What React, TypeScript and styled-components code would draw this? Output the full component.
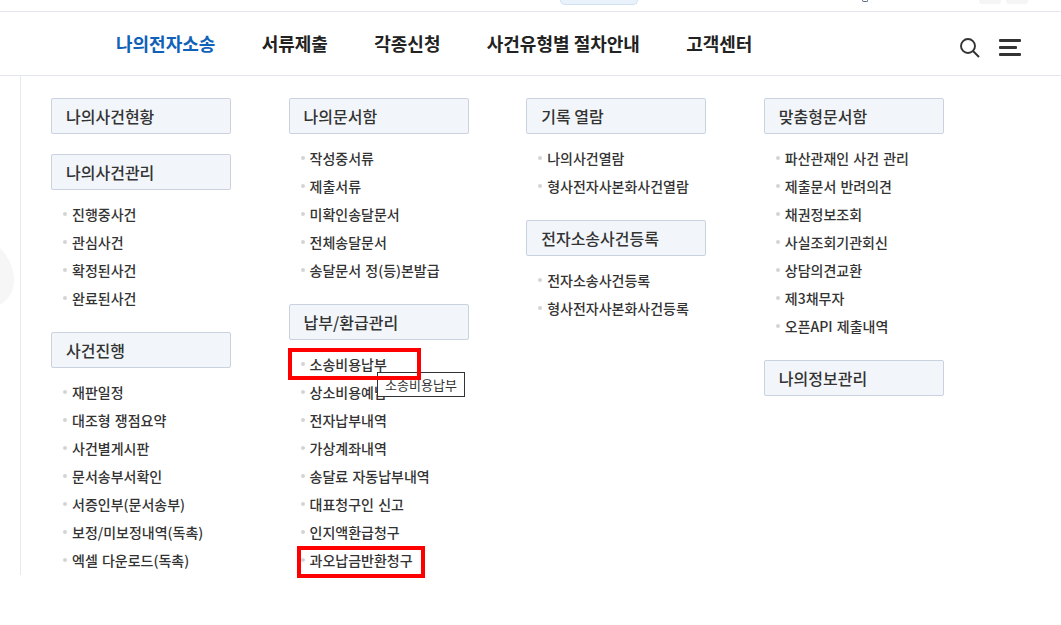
import React from 'react';
import styled, { createGlobalStyle } from 'styled-components';

const GlobalStyle = createGlobalStyle`
    html, body {
        margin: 0;
        padding: 0;
        background: #fff;
    }
    body {
        font-family: "Noto Sans CJK KR", "Noto Sans", sans-serif;
        overflow: hidden;
    }
`;

const Page = styled.div`
    position: relative;
    width: 1061px;
    height: 625px;
    overflow: hidden;
    background: #fff;
`;

const TopStrip = styled.div`
    display: flex;
    height: 11px;
    border-bottom: 1px solid #e6e8ee;
    padding-left: 560px;
`;

const TopPill = styled.div`
    width: 78px;
    height: 5px;
    box-sizing: border-box;
    background: #e9f1fb;
    border: 1px solid #d0e0f3;
    border-top: 0;
    border-radius: 0 0 10px 10px;
`;

const TopMark = styled.div`
    width: 6px;
    height: 2px;
    margin-left: 224px;
    border: 1px solid #5a6a80;
    border-top: 0;
    box-sizing: border-box;
    border-radius: 0 0 3px 3px;
`;

const TopButtons = styled.div`
    display: flex;
    gap: 5px;
    margin-left: 111px;
`;

const TopButton = styled.div`
    width: 22px;
    height: 4px;
    background: #f5f5f5;
    border-radius: 0 0 3px 3px;
`;

const Header = styled.header`
    display: flex;
    align-items: center;
    justify-content: space-between;
    height: 63px;
    padding: 0 40px 0 116px;
    border-bottom: 1px solid #e3e6ec;
`;

const Nav = styled.nav`
    display: flex;
    gap: 46.3px;
    margin-top: -2px;
`;

const NavItem = styled.a<{ $active?: boolean }>`
    font-size: 18px;
    line-height: 24px;
    font-weight: 700;
    color: ${(p) => (p.$active ? '#0f62b8' : '#222')};
`;

const HeaderIcons = styled.div`
    display: flex;
    align-items: center;
    gap: 19px;
    margin-top: 8px;
`;

const Body = styled.div`
    display: grid;
    grid-template-columns: repeat(4, 180px);
    column-gap: 57.6px;
    align-items: start;
    height: 499px;
    margin-left: 20px;
    padding: 22px 0 0 30px;
    border-left: 1px solid #e6e9f0;
    box-sizing: border-box;
`;

const Column = styled.div`
    display: flex;
    flex-direction: column;
`;

const GroupTitle = styled.div`
    box-sizing: border-box;
    height: 36px;
    line-height: 34px;
    padding-left: 14px;
    font-size: 16px;
    font-weight: 500;
    color: #333;
    background: #f2f6fa;
    border: 1px solid #c9d2de;
    border-radius: 2px;
    margin-bottom: 20px;
`;

const LinkList = styled.ul`
    list-style: none;
    margin: -10px 0 20px;
    padding: 0;
`;

const LinkRow = styled.li`
    display: flex;
    align-items: center;
    height: 28px;
    padding-left: 12px;
    font-size: 14px;
    font-weight: 500;
    word-spacing: 1px;
    color: #333;
    white-space: nowrap;

    &::before {
        content: '';
        width: 4px;
        height: 4px;
        margin-right: 5px;
        border-radius: 50%;
        background: #d4d4d4;
    }
`;

const Highlight = styled.span<{ $left: number; $top: number; $width: number }>`
    position: absolute;
    left: ${(p) => p.$left}px;
    top: ${(p) => p.$top}px;
    width: ${(p) => p.$width}px;
    height: 32px;
    box-sizing: border-box;
    border: 4px solid #ff0000;
`;

const Tooltip = styled.div`
    position: absolute;
    left: 377px;
    top: 372px;
    width: 88px;
    height: 25px;
    box-sizing: border-box;
    border: 1px solid #333;
    background: #fff;
    color: #333;
    font-size: 13px;
    line-height: 23px;
    text-align: center;
    white-space: nowrap;
`;

const SideShape = styled.svg`
    position: absolute;
    left: 0;
    top: 246px;
`;

type Group = { title: string; links?: string[] };

const columns: Group[][] = [
    [
        { title: '나의사건현황' },
        { title: '나의사건관리', links: ['진행중사건', '관심사건', '확정된사건', '완료된사건'] },
        {
            title: '사건진행',
            links: ['재판일정', '대조형 쟁점요약', '사건별게시판', '문서송부서확인', '서증인부(문서송부)', '보정/미보정내역(독촉)', '엑셀 다운로드(독촉)'],
        },
    ],
    [
        { title: '나의문서함', links: ['작성중서류', '제출서류', '미확인송달문서', '전체송달문서', '송달문서 정(등)본발급'] },
        {
            title: '납부/환급관리',
            links: ['소송비용납부', '상소비용예납', '전자납부내역', '가상계좌내역', '송달료 자동납부내역', '대표청구인 신고', '인지액환급청구', '과오납금반환청구'],
        },
    ],
    [
        { title: '기록 열람', links: ['나의사건열람', '형사전자사본화사건열람'] },
        { title: '전자소송사건등록', links: ['전자소송사건등록', '형사전자사본화사건등록'] },
    ],
    [
        { title: '맞춤형문서함', links: ['파산관재인 사건 관리', '제출문서 반려의견', '채권정보조회', '사실조회기관회신', '상담의견교환', '제3채무자', '오픈API 제출내역'] },
        { title: '나의정보관리' },
    ],
];

const navItems = ['나의전자소송', '서류제출', '각종신청', '사건유형별 절차안내', '고객센터'];

export default function App() {
    return (
        <Page>
            <GlobalStyle />
            <TopStrip>
                <TopPill />
                <TopMark />
                <TopButtons>
                    <TopButton />
                    <TopButton />
                </TopButtons>
            </TopStrip>
            <Header>
                <Nav>
                    {navItems.map((item, i) => (
                        <NavItem key={item} $active={i === 0}>
                            {item}
                        </NavItem>
                    ))}
                </Nav>
                <HeaderIcons>
                    <svg width="20" height="20" viewBox="0 0 20 20" fill="none" stroke="#333" strokeWidth="1.9">
                        <circle cx="8" cy="8" r="7" />
                        <path d="M13 13l6 6" />
                    </svg>
                    <svg width="22" height="17" viewBox="0 0 22 17" fill="#333">
                        <rect x="0" y="0" width="22" height="3" rx="1" />
                        <rect x="0" y="7" width="18" height="3" rx="1" />
                        <rect x="0" y="14" width="22" height="3" rx="1" />
                    </svg>
                </HeaderIcons>
            </Header>
            <Body>
                {columns.map((groups, c) => (
                    <Column key={c}>
                        {groups.map((g) => (
                            <React.Fragment key={g.title}>
                                <GroupTitle>{g.title}</GroupTitle>
                                {g.links && (
                                    <LinkList>
                                        {g.links.map((l) => (
                                            <LinkRow key={l}>{l}</LinkRow>
                                        ))}
                                    </LinkList>
                                )}
                            </React.Fragment>
                        ))}
                    </Column>
                ))}
            </Body>
            <SideShape width="16" height="62" viewBox="0 0 16 62">
                <path d="M0 2C8 10 14 22 14 34C14 46 8 54 0 59Z" fill="#f6f6f6" />
            </SideShape>
            <Tooltip>소송비용납부</Tooltip>
            <Highlight $left={288} $top={348} $width={133} />
            <Highlight $left={297} $top={546} $width={128} />
        </Page>
    );
}
